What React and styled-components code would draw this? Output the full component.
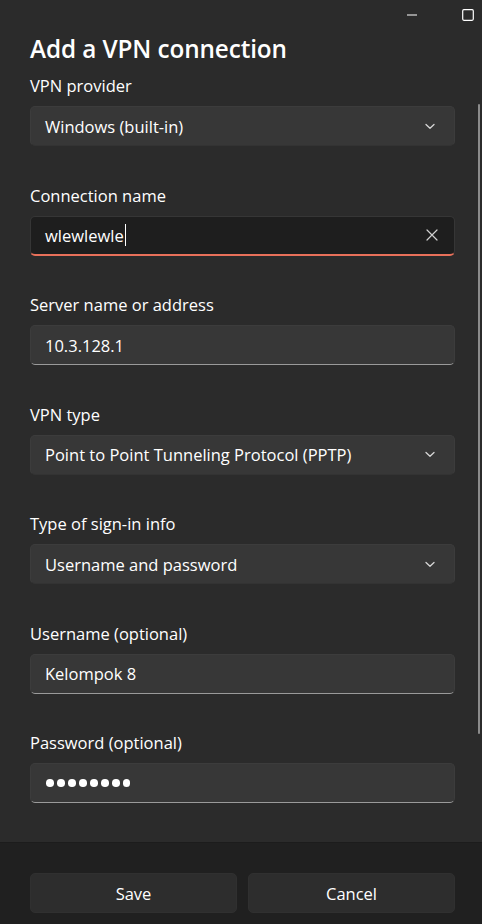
import React from "react";
import styled, { createGlobalStyle } from "styled-components";

const Global = createGlobalStyle`
  html, body { margin: 0; padding: 0; background: #202020; }
  body { font-family: "Open Sans", "Noto Sans", sans-serif; color: #ffffff; }
  #root { width: 482px; height: 924px; }
  * { box-sizing: border-box; }
`;

const Window = styled.div`
  width: 482px;
  height: 924px;
  display: flex;
  flex-direction: column;
  background: #2b2b2b;
  position: relative;
  overflow: hidden;
`;

const TitleBar = styled.div`
  height: 30px;
  display: flex;
  justify-content: flex-end;
  align-items: center;
  padding-right: 8px;
  gap: 44px;
`;

const CaptionBtn = styled.div`
  width: 12px;
  height: 12px;
  display: flex;
  align-items: center;
  justify-content: center;
`;

const Body = styled.div`
  flex: 1;
  padding: 0 27px 0 30px;
  display: flex;
  flex-direction: column;
`;

const Title = styled.h1`
  margin: 1px 0 7px 0;
  font-size: 24.3px;
  font-weight: 600;
  line-height: 36px;
  height: 36px;
  letter-spacing: -0.1px;
`;

const Field = styled.div`
  display: flex;
  flex-direction: column;
  margin-bottom: ${(p) => (p.$last ? 0 : "37.5px")};
`;

const Label = styled.div`
  font-size: 16.5px;
  line-height: 24px;
  height: 24px;
  margin-bottom: 8px;
  color: #ffffff;
`;

const Box = styled.div`
  height: 40px;
  border-radius: 5px;
  display: flex;
  align-items: center;
  padding: 0 ${(p) => (p.$clear ? "16px" : "19px")} 0 14px;
  font-size: 16.5px;
  color: #ffffff;
  background: ${(p) => (p.$focused ? "#1e1e1e" : "#373737")};
  border: 1px solid ${(p) => (p.$focused ? "#363636" : "#3c3c3c")};
  border-bottom: ${(p) =>
    p.$focused ? "2px solid #e8705a" : p.$input ? "1px solid #9a9a9a" : "1px solid #333333"};
`;

const Value = styled.span`
  flex: 1;
  white-space: nowrap;
  display: flex;
  align-items: center;
`;

const Caret = styled.span`
  display: inline-block;
  width: 1px;
  height: 22px;
  background: #ffffff;
  margin-left: 1px;
`;

const Dots = styled.div`
  display: flex;
  gap: 3.4px;
  padding-left: 1px;
`;

const Dot = styled.span`
  width: 7.6px;
  height: 7.6px;
  border-radius: 50%;
  background: #ffffff;
`;

const Footer = styled.div`
  height: 82px;
  background: #202020;
  border-top: 1px solid #1c1c1c;
  display: grid;
  grid-template-columns: 1fr 1fr;
  gap: 11px;
  padding: 30px 27px 0 30px;
`;

const Button = styled.div`
  height: 40px;
  border-radius: 5px;
  background: #2d2d2d;
  border: 1px solid #303030;
  display: flex;
  align-items: center;
  justify-content: center;
  font-size: 16.5px;
  color: #ffffff;
`;

const Scrollbar = styled.div`
  position: absolute;
  right: 2px;
  top: 104px;
  width: 2px;
  height: 630px;
  border-radius: 1px;
  background: #8c8c8c;
`;

const Chevron = () => (
  <svg width="10" height="7" viewBox="0 0 10 7">
    <path d="M1 1.5 L5 5.3 L9 1.5" fill="none" stroke="#d6d6d6" strokeWidth="1.3" strokeLinecap="round" strokeLinejoin="round" />
  </svg>
);

const Clear = () => (
  <svg width="12" height="12" viewBox="0 0 12 12">
    <path d="M1 1 L11 11 M11 1 L1 11" fill="none" stroke="#d0d0d0" strokeWidth="1.2" strokeLinecap="round" />
  </svg>
);

const Select = ({ value }) => (
  <Box>
    <Value>{value}</Value>
    <Chevron />
  </Box>
);

export default function App() {
  return (
    <>
      <Global />
      <Window>
        <TitleBar>
          <CaptionBtn>
            <svg width="11" height="2" viewBox="0 0 11 2"><rect x="0" y="0.5" width="10" height="1" fill="#ffffff" /></svg>
          </CaptionBtn>
          <CaptionBtn>
            <svg width="12" height="12" viewBox="0 0 12 12"><rect x="0.7" y="0.7" width="10.6" height="10.6" rx="1.2" fill="none" stroke="#ffffff" strokeWidth="1.2" /></svg>
          </CaptionBtn>
        </TitleBar>
        <Body>
          <Title>Add a VPN connection</Title>
          <Field>
            <Label>VPN provider</Label>
            <Select value="Windows (built-in)" />
          </Field>
          <Field>
            <Label>Connection name</Label>
            <Box $focused $clear>
              <Value>wlewlewle<Caret /></Value>
              <Clear />
            </Box>
          </Field>
          <Field>
            <Label>Server name or address</Label>
            <Box $input><Value>10.3.128.1</Value></Box>
          </Field>
          <Field>
            <Label>VPN type</Label>
            <Select value="Point to Point Tunneling Protocol (PPTP)" />
          </Field>
          <Field>
            <Label>Type of sign-in info</Label>
            <Select value="Username and password" />
          </Field>
          <Field>
            <Label>Username (optional)</Label>
            <Box $input><Value>Kelompok 8</Value></Box>
          </Field>
          <Field $last>
            <Label>Password (optional)</Label>
            <Box $input>
              <Dots>
                {Array.from({ length: 8 }).map((_, i) => <Dot key={i} />)}
              </Dots>
            </Box>
          </Field>
        </Body>
        <Footer>
          <Button>Save</Button>
          <Button>Cancel</Button>
        </Footer>
        <Scrollbar />
      </Window>
    </>
  );
}
